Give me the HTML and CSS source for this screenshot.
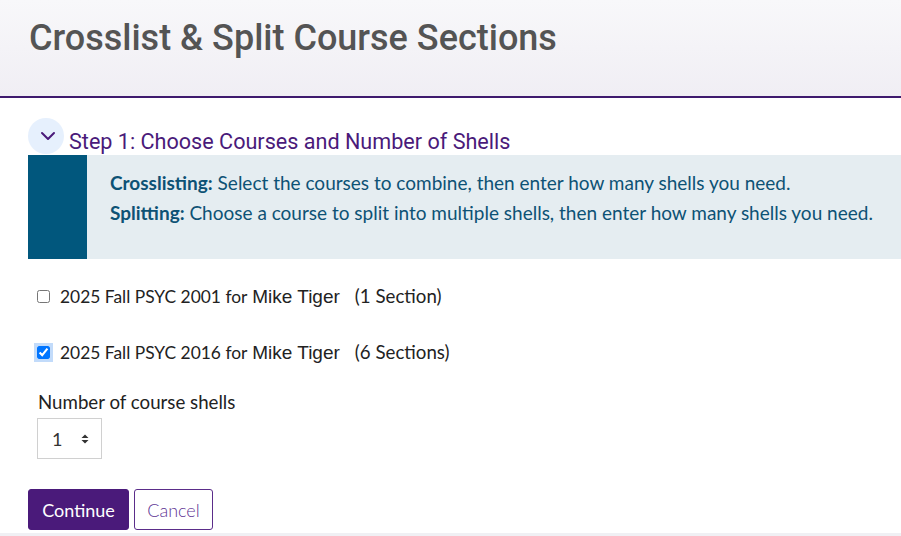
FILE: index.html
```html
<!DOCTYPE html>
<html>
<head>
<meta charset="utf-8">
<link rel="stylesheet" href="styles.css">
</head>
<body>
<header class="page-header">
  <h1 class="page-title">Crosslist &amp; Split Course Sections</h1>
</header>
<main class="content">
  <div class="step-head">
    <span class="toggle">
      <svg width="16" height="10" viewBox="0 0 16 10"><path d="M2 2 L8 8 L14 2" fill="none" stroke="#4a1a7a" stroke-width="2" stroke-linecap="round" stroke-linejoin="round"/></svg>
    </span>
    <span class="step-title">Step 1: Choose Courses and Number of Shells</span>
  </div>
  <div class="info">
    <div class="info-bar"></div>
    <div class="info-text">
      <p><b>Crosslisting:</b> Select the courses to combine, then enter how many shells you need.</p>
      <p><b>Splitting:</b> Choose a course to split into multiple shells, then enter how many shells you need.</p>
    </div>
  </div>
  <label class="course">
    <input type="checkbox" class="cb">
    <span class="course-text"><span class="term">2025 Fall PSYC 2001 for</span> <span class="name">Mike Tiger</span><span class="sections">(1 Section)</span></span>
  </label>
  <label class="course course-2">
    <input type="checkbox" class="cb cb-on" checked>
    <span class="course-text"><span class="term">2025 Fall PSYC 2016 for</span> <span class="name">Mike Tiger</span><span class="sections">(6 Sections)</span></span>
  </label>
  <div class="field">
    <div class="field-label">Number of course shells</div>
    <div class="select">
      <span class="select-val">1</span>
      <svg width="8" height="10" viewBox="0 0 8 10"><path d="M4 0.5 L7.5 4 L0.5 4 Z M4 9.5 L7.5 6 L0.5 6 Z" fill="#333"/></svg>
    </div>
  </div>
  <div class="actions">
    <button class="btn btn-primary">Continue</button>
    <button class="btn btn-secondary">Cancel</button>
  </div>
</main>
<div class="footer-strip"></div>
</body>
</html>
```
FILE: styles.css
```css
html, body {
  margin: 0;
  padding: 0;
  background: #fff;
  overflow: hidden;
}
body {
  width: 901px;
  height: 536px;
  position: relative;
}
.page-header {
  box-sizing: border-box;
  height: 98px;
  background: linear-gradient(#f8f8fa, #f0eef4);
  border-bottom: 2px solid #3f1a6e;
  padding: 17px 0 0 29px;
}
.page-title {
  margin: 0;
  font-family: Roboto, sans-serif;
  font-weight: 500;
  font-size: 36px;
  line-height: 42px;
  color: #545454;
}
.content {
  padding: 20px 0 0 28px;
}
.step-head {
  display: flex;
  align-items: flex-start;
  height: 37px;
  overflow: hidden;
}
.toggle {
  flex: none;
  position: relative;
  width: 36px;
  height: 36px;
  border-radius: 50%;
  background: #e6f0fd;
}
.toggle svg {
  position: absolute;
  left: 12px;
  top: 13px;
}
.step-title {
  font-family: Roboto, sans-serif;
  font-size: 21.6px;
  line-height: 26px;
  color: #4a1a7a;
  margin: 11px 0 0 5px;
}
.info {
  display: flex;
  height: 104px;
  background: #e5edf1;
}
.info-bar {
  width: 59px;
  background: #01577d;
}
.info-text {
  padding: 13px 0 0 23px;
  font-family: Lato, sans-serif;
  font-size: 19px;
  color: #0d5275;
}
.info-text p {
  margin: 0;
  line-height: 30px;
  white-space: nowrap;
}
.info-text b { font-weight: 700; }
.course {
  display: flex;
  align-items: center;
  height: 24px;
  margin: 25px 0 0 9px;
  color: #222;
}
.course-2 { margin-top: 32px; }
.course-text {
  font-family: Lato, sans-serif;
  font-size: 18.7px;
  line-height: 24px;
  white-space: nowrap;
}
.term { font-size: 17.4px; }
.name {
  font-family: "Liberation Sans", Arial, sans-serif;
  font-size: 19px;
}
.sections { margin-left: 15px; }
.cb {
  margin: 0 10px 0 0;
  width: 13px;
  height: 13px;
}
.cb-on {
  outline: 3px solid #c2dbfa;
  border-radius: 2px;
}
.field {
  margin: 26px 0 0 10px;
}
.field-label {
  font-family: Lato, sans-serif;
  font-size: 18.7px;
  color: #222;
  line-height: 24px;
}
.select {
  margin-top: 4px;
  margin-left: -1px;
  width: 65px;
  height: 41px;
  box-sizing: border-box;
  border: 1px solid #d0d0d0;
  display: flex;
  align-items: center;
  padding-left: 14px;
  gap: 19px;
}
.select-val {
  font-family: Lato, sans-serif;
  font-size: 18px;
  color: #333;
}
.select svg { display: block; }
.actions {
  display: flex;
  gap: 5px;
  margin-top: 30px;
}
.btn {
  height: 41px;
  font-family: Lato, sans-serif;
  font-size: 18px;
  border-radius: 3px;
  cursor: pointer;
}
.btn-primary {
  width: 101px;
  background: #4a1a7a;
  border: 1px solid #4a1a7a;
  color: #fff;
}
.btn-secondary {
  width: 79px;
  background: #fff;
  border: 1px solid #5b2d8a;
  color: #5e3494;
  font-weight: 300;
}
.footer-strip {
  position: absolute;
  left: 0;
  right: 0;
  bottom: 0;
  height: 3px;
  background: #f0f0f4;
}
```
